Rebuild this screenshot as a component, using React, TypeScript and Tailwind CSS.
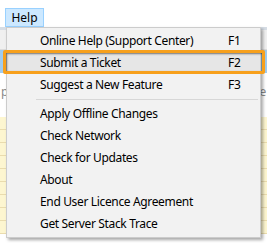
const items: { label: string; key?: string }[] = [
  { label: 'Online Help (Support Center)', key: 'F1' },
  { label: 'Submit a Ticket', key: 'F2' },
  { label: 'Suggest a New Feature', key: 'F3' },
];

const moreItems = [
  'Apply Offline Changes',
  'Check Network',
  'Check for Updates',
  'About',
  'End User Licence Agreement',
  'Get Server Stack Trace',
];

const MenuRow = ({ label, shortcut, active }: { label: string; shortcut?: string; active?: boolean }) => (
  <div className={`flex h-[22px] items-center ${active ? 'bg-[#e6e6e6]' : ''}`}>
    <span className="flex-1 pl-[33px] whitespace-nowrap">{label}</span>
    {shortcut && <span className="w-[32px]">{shortcut}</span>}
  </div>
);

export default function App() {
  return (
    <div
      className="relative h-[243px] w-[267px] overflow-hidden bg-white text-[12px] tracking-[-0.35px] text-black"
      style={{ fontFamily: '"Noto Sans", "Open Sans", sans-serif' }}
    >
      {/* window behind the menu */}
      <div className="flex h-[27px] items-end px-[5px]">
        <div className="flex h-[19px] w-[39px] items-center justify-center border border-[#99d1ff] bg-[#cce8ff] tracking-normal">Help</div>
      </div>
      <div className="h-[3px] bg-[#d6dde5]" />
      <div className="h-[20px] border-b border-[#dcdcdc] bg-[#f0f0f0]" />
      <div className="h-[23px] bg-[#9fcbef]" />
      <div className="flex h-[44px] flex-col bg-white">
        <div className="h-[10px]" />
        <div className="flex justify-between px-[1px] text-[#8a8a8a]">
          <span>p</span>
          <span>te</span>
        </div>
      </div>
      <div className="flex flex-col bg-[#fdf6d0]">
        {Array.from({ length: 9 }).map((_, i) => (
          <div key={i} className="h-[13px] border-b border-[#eadcae]" />
        ))}
      </div>

      {/* dropdown menu */}
      <div className="absolute left-[6px] top-[27px] flex w-[255px] flex-col border border-[#cccccc] bg-[#f2f2f2] py-[2px] shadow-[2px_2px_3px_rgba(0,0,0,0.35)]">
        {items.map((it, i) => (
          <MenuRow key={it.label} label={it.label} shortcut={it.key} active={i === 1} />
        ))}
        <div className="flex h-[7px] items-center pl-[29px] pr-[2px]">
          <div className="h-px w-full bg-[#d7d7d7]" />
        </div>
        {moreItems.map(l => (
          <MenuRow key={l} label={l} />
        ))}
      </div>

      {/* highlight box */}
      <div className="absolute left-[3px] top-[50px] h-[24px] w-[262px] rounded-[2px] border-[3px] border-[#f7a01c] shadow-[inset_1px_1px_2px_rgba(0,0,0,0.5)]" />
    </div>
  );
}
